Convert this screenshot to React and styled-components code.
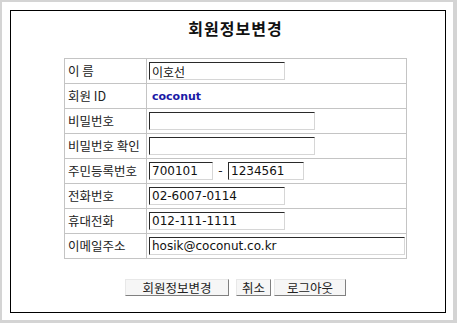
import React from "react";
import styled, {createGlobalStyle} from "styled-components";

const GlobalStyle = createGlobalStyle`
  body {
    margin: 0;
    background: #fff;
    font-family: "DejaVu Sans", "Noto Sans CJK KR", sans-serif;
  }
`;

const Frame = styled.div`
  box-sizing: border-box;
  width: 457px;
  height: 323px;
  border-style: solid;
  border-color: #d4d4d4;
  border-width: 2px 4px 3px 2px;
  padding: 8px 7px 7px 8px;
  display: flex;
  background: #fff;
`;

const Panel = styled.div`
  flex: 1;
  border: 1px solid #000;
  display: flex;
  flex-direction: column;
  align-items: center;
  padding: 7px 0 0 15px;
`;

const Title = styled.h1`
  margin: 0;
  font-family: "Noto Sans CJK KR", sans-serif;
  font-size: 16px;
  line-height: 20px;
  font-weight: 700;
  letter-spacing: 1px;
  color: #111;
`;

const Form = styled.div`
  margin-top: 20px;
  width: 343px;
  display: grid;
  grid-template-columns: 82px 1fr;
  grid-auto-rows: 25px;
  border-top: 1px solid #c4c4c4;
  border-left: 1px solid #c4c4c4;
  box-sizing: border-box;
`;

const Label = styled.div`
  box-sizing: border-box;
  border-right: 1px solid #c4c4c4;
  border-bottom: 1px solid #c4c4c4;
  padding: 0 0 1px 3px;
  display: flex;
  align-items: center;
  font-family: "Noto Sans CJK KR", sans-serif;
  font-size: 12.5px;
  color: #222;
  white-space: nowrap;
`;

const Value = styled.div`
  box-sizing: border-box;
  border-right: 1px solid #c4c4c4;
  border-bottom: 1px solid #c4c4c4;
  padding-left: 2px;
  display: flex;
  align-items: center;
  font-size: 12px;
  color: #222;
`;

const Field = styled.input`
  box-sizing: border-box;
  width: ${p => p.$w}px;
  height: 18px;
  margin: 0;
  padding: 0 2px;
  border-style: solid;
  border-width: 1px;
  border-color: #2a2a2a #d6d6d6 #d6d6d6 #2a2a2a;
  background: #fff;
  font-family: "DejaVu Sans", "Noto Sans CJK KR", sans-serif;
  font-size: 12px;
  color: #111;
  outline: none;
`;

const Dash = styled.span`
  width: 15px;
  text-align: center;
  font-size: 12px;
`;

const UserId = styled.span`
  padding-left: 3px;
  font-family: "DejaVu Sans", sans-serif;
  font-weight: 700;
  font-size: 11px;
  color: #1a1aa6;
`;

const Buttons = styled.div`
  margin-top: 20px;
  display: flex;
  gap: 3px;
`;

const Button = styled.button`
  box-sizing: border-box;
  width: ${p => p.$w}px;
  height: 17px;
  margin: 0 ${p => p.$mr || 0}px 0 0;
  padding: 0;
  border-style: solid;
  border-width: 1px;
  border-color: #e8e8e8 #808080 #808080 #e8e8e8;
  background: #f6f6f6;
  font-family: "Noto Sans CJK KR", sans-serif;
  font-size: 12.5px;
  line-height: 15px;
  color: #222;
`;

export default function App() {
    return (
        <>
            <GlobalStyle/>
            <Frame>
                <Panel>
                    <Title>회원정보변경</Title>
                    <Form>
                        <Label>이 름</Label>
                        <Value><Field $w={136} defaultValue="이호선"/></Value>

                        <Label>회원 ID</Label>
                        <Value><UserId>coconut</UserId></Value>

                        <Label>비밀번호</Label>
                        <Value><Field $w={166} type="password"/></Value>

                        <Label>비밀번호 확인</Label>
                        <Value><Field $w={166} type="password"/></Value>

                        <Label>주민등록번호</Label>
                        <Value>
                            <Field $w={64} defaultValue="700101"/>
                            <Dash>-</Dash>
                            <Field $w={76} defaultValue="1234561"/>
                        </Value>

                        <Label>전화번호</Label>
                        <Value><Field $w={136} defaultValue="02-6007-0114"/></Value>

                        <Label>휴대전화</Label>
                        <Value><Field $w={136} defaultValue="012-111-1111"/></Value>

                        <Label>이메일주소</Label>
                        <Value><Field $w={256} defaultValue="hosik@coconut.co.kr"/></Value>
                    </Form>
                    <Buttons>
                        <Button $w={104} $mr={4}>회원정보변경</Button>
                        <Button $w={35}>취소</Button>
                        <Button $w={72}>로그아웃</Button>
                    </Buttons>
                </Panel>
            </Frame>
        </>
    );
}
